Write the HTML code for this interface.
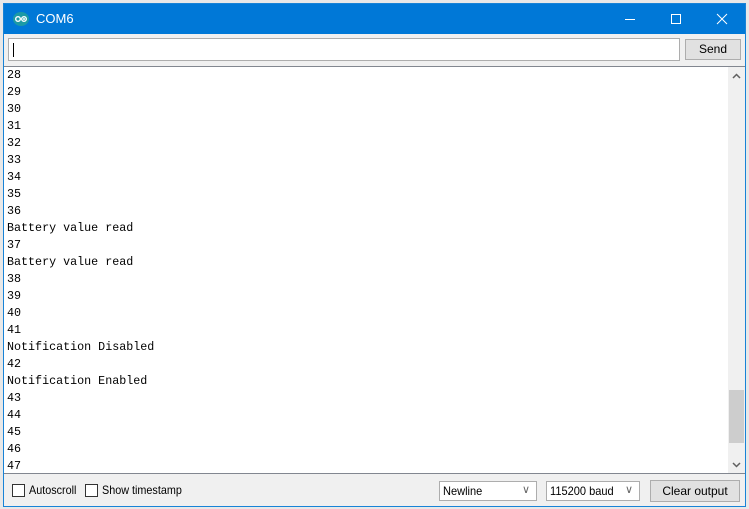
<!DOCTYPE html>
<html><head><meta charset="utf-8"><style>
*{margin:0;padding:0;box-sizing:border-box}
body{width:749px;height:509px;background:#e8e8e8;position:relative;overflow:hidden;font-family:"Liberation Sans",sans-serif}
.win{position:absolute;left:3px;top:3px;width:743px;height:504px;border:1px solid #1883d7;background:#f0f0f0}
.title{position:absolute;left:0;top:0;width:741px;height:30px;background:#0078d7;color:#fff;font-size:13px}
.title .t{position:absolute;left:32px;top:7px}
.logo{position:absolute;left:9px;top:8px;width:16px;height:14px;border-radius:50%;background:#1c9aa5}
.ctl{position:absolute;top:0;height:30px;width:46px}
.in{position:absolute;left:4px;top:34px;width:672px;height:23px;background:#fff;border:1px solid #adadad}
.in i{position:absolute;left:4px;top:4px;width:1px;height:14px;background:#000}
.btn{position:absolute;background:#e1e1e1;border:1px solid #adadad;font-size:12px;color:#000;text-align:center}
.out{position:absolute;left:0;top:62px;width:741px;height:407px;background:#fff;border-top:1px solid #828790}
.txt{position:absolute;left:3px;top:0;font-family:"Liberation Mono",monospace;font-size:11.7px;line-height:17px;color:#000;white-space:pre}
.sb{position:absolute;left:724px;top:0;width:17px;height:406px;background:#f0f0f0}
.thumb{position:absolute;left:1px;top:323px;width:15px;height:53px;background:#cdcdcd}
.bot{position:absolute;left:0;top:469px;width:741px;height:33px;border-top:1px solid #828790}
.cb{position:absolute;top:10px;width:13px;height:13px;border:1px solid #333;background:#fff}
.lb{position:absolute;top:9px;font-size:12px;transform:scaleX(.9);transform-origin:left}
.sel{position:absolute;top:7px;height:20px;background:#fff;border:1px solid #adadad;font-size:12px}
.sel span{position:absolute;left:3px;top:2px;transform:scaleX(.92);transform-origin:left}
.sel b{position:absolute;right:6px;top:1px;font-weight:normal;color:#666;font-size:11px}
</style></head><body>
<div class="win">
<div class="title"><div class="logo"><svg width="16" height="14" viewBox="0 0 16 14"><circle cx="5" cy="7" r="2.3" fill="none" stroke="#fff" stroke-width="1.4"/><circle cx="11" cy="7" r="2.3" fill="none" stroke="#fff" stroke-width="1.4"/><path d="M10 7h2M11 6v2" stroke="#fff" stroke-width="1"/></svg></div><span class="t">COM6</span>
<svg class="ctl" style="left:603px" viewBox="0 0 46 30"><path d="M18 15.5h10" stroke="#fff"/></svg>
<svg class="ctl" style="left:649px" viewBox="0 0 46 30"><rect x="18.5" y="10.5" width="9" height="9" fill="none" stroke="#fff"/></svg>
<svg class="ctl" style="left:695px" viewBox="0 0 46 30"><path d="M18 10l10 10M28 10l-10 10" stroke="#fff"/></svg>
</div>
<div class="in"><i></i></div>
<div class="btn" style="left:681px;top:35px;width:56px;height:21px;line-height:19px">Send</div>
<div class="out"><div class="txt">28
29
30
31
32
33
34
35
36
Battery value read
37
Battery value read
38
39
40
41
Notification Disabled
42
Notification Enabled
43
44
45
46
47</div>
<div class="sb"><svg style="position:absolute;left:4px;top:6px" width="9" height="6"><path d="M1 5l3.5-3.5L8 5" fill="none" stroke="#606060" stroke-width="1.5"/></svg><div class="thumb"></div><svg style="position:absolute;left:4px;top:395px" width="9" height="6"><path d="M1 1l3.5 3.5L8 1" fill="none" stroke="#606060" stroke-width="1.5"/></svg></div>
</div>
<div class="bot">
<div class="cb" style="left:8px"></div><span class="lb" style="left:25px">Autoscroll</span>
<div class="cb" style="left:81px"></div><span class="lb" style="left:98px">Show timestamp</span>
<div class="sel" style="left:435px;width:98px"><span>Newline</span><b>∨</b></div>
<div class="sel" style="left:542px;width:94px"><span>115200 baud</span><b>∨</b></div>
<div class="btn" style="left:646px;top:6px;width:90px;height:22px;line-height:20px">Clear output</div>
</div>
</div>
</body></html>
